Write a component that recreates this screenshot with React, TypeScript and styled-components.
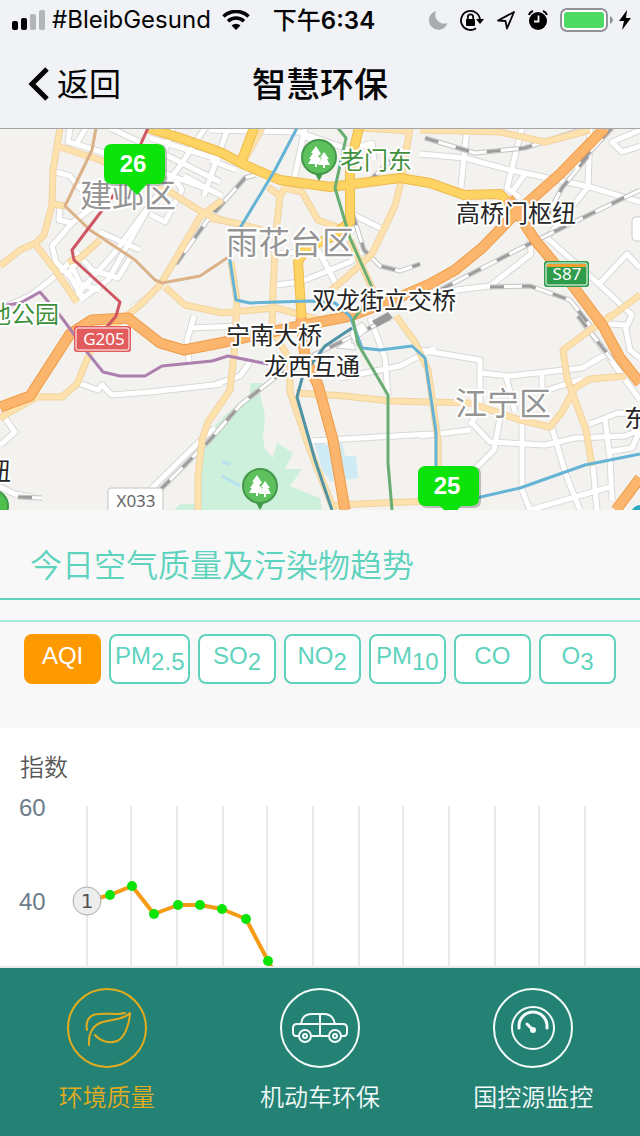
import React, { useState } from 'react';
import styled, { createGlobalStyle } from 'styled-components';

const cjk = '"Noto Sans CJK SC", sans-serif';
const latin = '"Liberation Sans", "Noto Sans CJK SC", sans-serif';

const GlobalStyle = createGlobalStyle`
  *, *::before, *::after { box-sizing: border-box; }
  body { margin: 0; background: #ffffff; font-family: ${latin}; }
  button { font: inherit; cursor: pointer; }
`;

const Screen = styled.div`
  display: flex;
  flex-direction: column;
  height: 100vh;
  overflow: hidden;
`;

const Header = styled.header`
  flex: none;
  background: #f0f2f5;
  color: #050505;
  border-bottom: 1px solid #a3a5a8;
`;

const StatusBar = styled.div`
  display: flex;
  align-items: center;
  justify-content: space-between;
  height: 40px;
  padding: 0 9px 0 12px;
`;

const StatusGroup = styled.div<{ $gap: number }>`
  display: flex;
  align-items: center;
  gap: ${(p) => p.$gap}px;
`;

const Carrier = styled.span`
  font: 400 24px/40px Inter, ${cjk};
  margin: 0 4px 0 0;
`;

const Time = styled.time`
  font: 600 24px/40px Inter, ${cjk};
  margin-left: 16px;
`;

const Cjk = styled.span`
  font-family: ${cjk};
  font-weight: 500;
`;

const NavBar = styled.div`
  display: grid;
  grid-template-columns: 1fr auto 1fr;
  align-items: center;
  height: 88px;
  padding: 0 28px;
`;

const BackButton = styled.button`
  display: flex;
  align-items: center;
  gap: 7px;
  justify-self: start;
  padding: 0;
  border: 0;
  background: none;
  color: inherit;
  font: 400 32px/48px ${cjk};
`;

const BackLabel = styled.span`
  padding-bottom: 4px;
  line-height: 44px;
`;

const PageTitle = styled.h1`
  margin: 0;
  padding-bottom: 2px;
  font: 500 34px/46px ${cjk};
`;

const Content = styled.main`
  flex: 1;
  min-height: 0;
  overflow-y: auto;
  scrollbar-width: none;
  background: #ffffff;
`;

const Drawing = styled.svg`
  display: block;
  width: 100%;
  height: auto;
`;

const TrendPanel = styled.section`
  background: #f8f8f8;
`;

const TrendTitle = styled.h2`
  margin: 0 0 20px;
  padding: 29px 30px 11px;
  border-bottom: 2px solid #5ed2bd;
  color: #5dd3bd;
  font: 350 32px/48px ${cjk};
`;

const PollutantBar = styled.div`
  display: flex;
  gap: 8px;
  padding: 12px 24px 44px;
  border-top: 2px solid #a3e8db;
`;

const Pollutant = styled.button<{ $active: boolean }>`
  flex: 1 1 0;
  height: 50px;
  padding: 0 4px 6px;
  border: 2px solid ${(p) => (p.$active ? '#ff9900' : '#5ed2bd')};
  border-radius: 8px;
  background: ${(p) => (p.$active ? '#ff9900' : '#ffffff')};
  color: ${(p) => (p.$active ? '#ffffff' : '#5dd3bd')};
  font: 400 24px/28px ${latin};
  white-space: nowrap;
`;

const Sub = styled.sub`
  font-size: 24px;
  line-height: 0;
  vertical-align: -6px;
`;

const ChartTitle = styled.h3`
  margin: 0;
  padding: 22px 20px 2px;
  color: #595959;
  font: 350 24px/32px ${cjk};
`;

const TabBar = styled.nav`
  flex: none;
  display: grid;
  grid-template-columns: repeat(3, 1fr);
  border-top: 2px solid #e6ebeb;
  background: #248274;
`;

const Tab = styled.button<{ $active: boolean }>`
  display: flex;
  flex-direction: column;
  align-items: center;
  gap: 10px;
  padding: 20px 0 22px;
  border: 0;
  background: none;
  color: ${(p) => (p.$active ? '#e3ac1e' : '#f4fbfa')};
  font: 350 24px/36px ${cjk};
`;

const Road = styled.g.attrs({ fill: 'none', strokeLinejoin: 'round' })``;

const whiteRoads = [
  'M56 172L70 176L78 186L95 200', 'M70 128L68 142L76 144L86 128', 'M76 144L145 166L215 192', 'M150 138L220 160',
  'M160 152L220 182', 'M173 128L163 156', 'M205 128L180 166L150 205L112 256L72 300', 'M220 150L204 196',
  'M184 176L222 196', 'M176 180L182 190L165 222L150 214', 'M110 128L140 142', 'M60 206L59 220L72 223L128 180',
  'M72 223L52 246L56 262L70 276L84 300', 'M100 232L140 250', 'M150 205L108 280L80 300', 'M76 252L92 270L118 278L130 258',
  'M70 262L80 284L100 290', 'M82 256L66 276', 'M0 309L30 296L58 274L78 254', 'M132 308L145 300',
  'M228 128L210 178', 'M210 130L300 132L325 150', 'M305 128L294 180', 'M302 133L350 150L372 143L374 160',
  'M210 160L236 170', 'M352 214L384 230', 'M276 285L300 282L350 262L362 252', 'M318 250L336 284', 'M275 254L300 252',
  'M420 154L465 158L510 170L590 187L640 202', 'M467 128L461 187', 'M522 128L507 188L520 198', 'M525 174L512 192',
  'M590 128L588 187L545 240', 'M640 130L612 142L622 152L640 146', 'M545 236L600 285L632 315L625 330', 'M600 283L627 254L640 268',
  'M530 240L531 254L490 286L440 292', 'M420 350L480 360L480 410L470 425', 'M480 373L510 376L582 368L610 352',
  'M506 376L515 412', 'M542 372L542 392L560 386L582 379', 'M470 421L490 442L545 445L575 438L625 436L640 430',
  'M500 418L494 450L474 470', 'M522 422L522 490L530 510', 'M552 428L566 475L580 510', 'M605 418L610 460L612 500',
  'M590 424L618 413L640 414', 'M608 452L632 448L640 430', 'M593 466L597 510', 'M530 510L610 487', 'M420 436L470 430',
  'M312 441L360 438L430 434', 'M370 318L385 358L388 395', 'M340 378L400 366L435 348', 'M78 383L98 390L102 385L112 395L150 392L222 384',
  'M150 490L205 436L215 428', 'M0 445L15 432L5 418', 'M0 487L15 494L32 497', 'M190 328L240 326', 'M194 316L187 340L189 362',
  'M210 386L240 376L250 362', 'M594 323L625 325L630 350L640 358', 'M584 323L640 400',
];

const lightRoads = [
  'M60 128L53 170L52 205L44 235L36 243L20 250L0 266', 'M36 245L55 270L77 302', 'M57 146L100 160L170 192L205 214L222 220',
  'M52 204L66 206', 'M100 240L80 258L68 262', 'M222 200L200 217L175 260L160 285L140 305L112 328L95 340L77 384L62 397L37 397L0 418',
  'M165 287L185 305L222 313L276 308L320 320', 'M210 218L240 224L262 230', 'M231 262L237 300L235 344L230 390L208 422L202 440L198 476L198 510',
  'M262 128L240 168', 'M268 187L280 196L276 232L273 290L272 330L290 360L290 392L310 450L334 510', 'M280 196L285 188L302 192L318 220L350 232',
  'M410 128L402 178L395 206L372 254L348 276L322 298', 'M350 240L372 288L385 310',
  'M396 316L415 342L428 370L438 440L438 470', 'M296 393L345 396L390 401L470 403L520 420L550 427L562 412L575 388L590 379L626 376',
  'M612 315L590 330L563 350L567 378L575 400L586 430L592 466', 'M420 130L500 132L545 142L590 130', 'M606 320L640 295', 'M335 505L430 501',
  'M410 131L360 128',
];

const trunkRoads = [
  'M148 128L180 138L220 152L245 165L280 180L330 187L400 178L430 183L464 195L500 194L512 206', 'M254 128L241 162',
  'M359 128L350 165L350 222L330 238L306 248L298 262L302 324',
];

const motorways = [
  'M0 407L30 396L70 334L92 320L128 318L160 343L184 350L220 343L280 330L350 316L400 297L430 284L455 270L482 248L515 214L560 174L605 128',
  'M508 198L535 240L573 286L603 326L620 358L640 383', 'M301 318L305 358L318 385L333 440L345 510', 'M640 478L616 510',
];

const railways = [
  'M215 212L245 178L255 175', 'M176 264L222 200', 'M352 212L364 250L380 266L400 271L420 264', 'M366 184L404 148', 'M425 138L475 153L525 148L586 128',
  'M440 290L525 246L640 190', 'M588 156L562 188L548 214', 'M612 128L575 168', 'M490 287L530 286L570 300L592 328',
  'M160 490L210 440L240 405L290 366L345 340L390 318', 'M18 497L42 498', 'M578 316L612 360',
];

const metroLines: [string, string, number][] = [
  ['M96 128L92 150L65 206L90 230L135 260L155 280L162 283L200 276L230 256', '#dcb187', 3],
  ['M148 128L139 148L113 196L72 250L74 260L120 302L116 316L106 328', '#cf5763', 3],
  ['M0 306L20 303L40 292L62 318L87 352L103 372L120 376L145 376L162 366L212 361L228 356L268 364', '#ad7fae', 3],
  ['M297 128L275 170L240 228L229 254L236 300L250 303L310 301L335 303L350 316L362 348L380 350L412 346L425 358L436 432L436 472', '#65b3d5', 3],
  ['M472 499L520 488L585 465L640 454', '#65b3d5', 3],
  ['M352 328L325 346L303 375L297 397L315 460L332 510', '#4f93a4', 3],
  ['M338 128L346 138L335 188L350 238L374 292L353 320L358 344L388 395L388 463L392 510', '#68ad72', 3],
];

const paths = (list: string[], stroke: string, width: number, dash?: string) => (
  <Road stroke={stroke} strokeWidth={width} strokeDasharray={dash}>
    {list.map((d) => <path key={d} d={d} />)}
  </Road>
);

const MapText = styled.text<{ $size: number; $color: string }>`
  font: 400 ${(p) => p.$size}px ${cjk};
  fill: ${(p) => p.$color};
  stroke: #ffffff;
  stroke-width: 4px;
  stroke-linejoin: round;
  paint-order: stroke;
`;

const ShieldText = styled.text`
  font: 400 17px "Noto Sans", sans-serif;
  text-anchor: middle;
`;

const PinText = styled.text`
  font: 700 24px ${latin};
  fill: #ffffff;
  text-anchor: middle;
`;

const AirPin = ({ x, y, value }: { x: number; y: number; value: number }) => (
  <g transform={`translate(${x} ${y})`}>
    <path d="M9 1H56Q63 1 63 8V35Q63 42 56 42H9Q2 42 2 35V8Q2 1 9 1Z" fill="#555555" opacity="0.35" />
    <path d="M8 0H53Q61 0 61 8V32Q61 40 53 40H43L33 51L22 40H8Q0 40 0 32V8Q0 0 8 0Z" fill="#0be30b" />
    <PinText x={29} y={28}>{value}</PinText>
  </g>
);

const ParkPin = ({ x, y }: { x: number; y: number }) => (
  <g transform={`translate(${x} ${y})`}>
    <path d="M-5 15L0 24L5 15Z" fill="#43984a" />
    <circle r="17" fill="#5dc05c" stroke="#43984a" strokeWidth="2" />
    <path d="M-3 -11L-8 -4H-6L-10 2H-8L-11 7H-4V10H-2V7H0L2 2L-1 -1L2 -3Z" fill="#ffffff" />
    <path d="M5 -5L1 1H3L-1 8H4V11H6V8H11L8 2H10Z" fill="#ffffff" />
  </g>
);

const CityMap = () => (
  <Drawing viewBox="0 129 640 381" role="img" aria-label="地图">
    <rect y="128" width="640" height="382" fill="#f3f2ef" />
    <path d="M250 383L263 383L260 394L265 416L263 439L265 449L273 458L277 443L293 453L285 469L302 469L290 486L309 494L320 498L322 510H174L180 504L198 504L205 436L225 415L250 395Z" fill="#cdf0dc" />
    <path d="M222 462L230 464M222 476L240 486" stroke="#b5e0ee" strokeWidth="3" />
    <path d="M314 441L326 445L342 442L345 456L356 456L358 478L331 482L322 470Z" fill="#cfebf5" />
    {paths(whiteRoads, '#d9d8d9', 7)}
    {paths(whiteRoads, '#ffffff', 5)}
    {paths(railways, '#c4c4c4', 5)}
    {paths(railways, '#ffffff', 3)}
    {paths(railways, '#9c9c9c', 3, '14 18')}
    {paths(lightRoads, '#f2d3a2', 7)}
    {paths(lightRoads, '#fde2ad', 5)}
    {paths(trunkRoads, '#efba4c', 10)}
    {paths(trunkRoads, '#fdd363', 8)}
    {paths(motorways, '#ee9c46', 11)}
    {paths(motorways, '#fcb56d', 9)}
    <path d="M350 332L362 322L368 330L352 344Z M336 348L352 338L356 350Z" fill="#ffffff" stroke="#cfcfcf" />
    <path d="M372 321L388 312L393 318L377 327Z" fill="#989898" />
    {metroLines.map(([d, color, width]) => (
      <Road key={d} stroke={color} strokeWidth={width}><path d={d} /></Road>
    ))}
    <rect x="632" y="217" width="16" height="24" rx="4" fill="#ffffff" stroke="#cccccc" />
    <circle cx="640" cy="514" r="9" fill="#2aa8be" />
    <circle cx="-8" cy="506" r="16" fill="#4fc04e" stroke="#43984a" strokeWidth="2" />

    <MapText x={80} y={207} $size={32} $color="#959595">建邺区</MapText>
    <MapText x={226} y={254} $size={32} $color="#959595">雨花台区</MapText>
    <MapText x={455} y={415} $size={32} $color="#959595">江宁区</MapText>
    <MapText x={340} y={169} $size={24} $color="#3f8f3d">老门东</MapText>
    <MapText x={-13} y={323} $size={24} $color="#3f8f3d">地公园</MapText>
    <MapText x={456} y={222} $size={24} $color="#262626">高桥门枢纽</MapText>
    <MapText x={312} y={309} $size={24} $color="#262626">双龙街立交桥</MapText>
    <MapText x={226} y={344} $size={24} $color="#262626">宁南大桥</MapText>
    <MapText x={264} y={375} $size={24} $color="#262626">龙西互通</MapText>
    <MapText x={624} y={427} $size={24} $color="#262626">东</MapText>
    <MapText x={-13} y={480} $size={24} $color="#262626">纽</MapText>

    <rect x="74" y="326" width="57" height="26" rx="3" fill="#e25c5e" />
    <rect x="76" y="328" width="53" height="22" rx="2" fill="none" stroke="#ffffff" />
    <ShieldText x={104} y={345} fill="#ffffff">G205</ShieldText>
    <rect x="544" y="261" width="45" height="26" rx="3" fill="#2f9c4c" />
    <rect x="546" y="263" width="41" height="22" rx="2" fill="none" stroke="#ffffff" />
    <rect x="547" y="264" width="39" height="3" fill="#f0a030" />
    <ShieldText x={567} y={280} fill="#ffffff">S87</ShieldText>
    <rect x="108" y="488" width="55" height="28" rx="3" fill="#ffffff" stroke="#c3c3c3" />
    <ShieldText x={136} y={507} fill="#666666">X033</ShieldText>

    <ParkPin x={319} y={157} />
    <ParkPin x={260} y={486} />
    <AirPin x={104} y={144} value={26} />
    <AirPin x={418} y={466} value={25} />
  </Drawing>
);

const gridLines = [87, 131, 177, 223, 267, 313, 359, 403, 449, 495, 539, 585];
const readings: [number, number][] = [
  [110, 111], [132, 102], [154, 130], [178, 121], [200, 121], [222, 125], [246, 135], [268, 177],
];

const AxisText = styled.text`
  font: 400 24px ${latin};
  fill: #6d7c8b;
`;

const MarkerText = styled.text`
  font: 400 20px "DejaVu Sans", sans-serif;
  fill: #555555;
  text-anchor: middle;
`;

const TrendChart = () => (
  <Drawing viewBox="0 0 640 230" role="img" aria-label="AQI">
    {gridLines.map((x) => <path key={x} d={`M${x} 22V230`} stroke="#e9e9e9" strokeWidth="2" />)}
    <AxisText x={19} y={32}>60</AxisText>
    <AxisText x={19} y={126}>40</AxisText>
    <polyline
      points={`87,117 ${readings.map((p) => p.join(',')).join(' ')} 290,215`}
      fill="none" stroke="#f59b14" strokeWidth="4" strokeLinejoin="round"
    />
    {readings.map(([x, y]) => <circle key={x} cx={x} cy={y} r="5" fill="#0be30b" />)}
    <circle cx="87" cy="117" r="14" fill="#eeeeee" stroke="#aaaaaa" />
    <MarkerText x={87} y={124}>1</MarkerText>
  </Drawing>
);

const SignalIcon = () => (
  <svg width="33" height="20" viewBox="0 0 33 20" aria-hidden="true">
    <rect y="11" width="6" height="9" rx="2" />
    <rect x="9" y="8" width="6" height="12" rx="2" />
    <rect x="18" y="4" width="6" height="16" rx="2" fill="#b4b5b7" />
    <rect x="27" width="6" height="20" rx="2" fill="#b4b5b7" />
  </svg>
);

const WifiIcon = () => (
  <svg width="28" height="20" viewBox="0 0 28 20" aria-hidden="true">
    <path d="M1.500 6.500A18 18 0 0 1 26.500 6.500M6 11.300A11.500 11.500 0 0 1 22 11.300" fill="none" stroke="#050505" strokeWidth="3.600" />
    <path d="M14 20L9.500 15.500A6.500 6.500 0 0 1 18.500 15.500Z" />
  </svg>
);

const MoonIcon = () => (
  <svg width="19" height="20" viewBox="0 0 19 20" aria-hidden="true">
    <path d="M7 1A9.500 9.500 0 1 0 18.500 13A9 9 0 0 1 7 1Z" fill="#a9abad" />
  </svg>
);

const LockIcon = () => (
  <svg width="24" height="22" viewBox="0 0 24 22" aria-hidden="true">
    <path d="M16 19.200A9.500 9.500 0 1 1 20 11" fill="none" stroke="#050505" strokeWidth="1.800" />
    <path d="M16 10H24L20 15Z" />
    <rect x="6" y="10" width="9" height="7" rx="1" />
    <path d="M7.800 10V8A2.700 2.700 0 0 1 13.200 8V10" fill="none" stroke="#050505" strokeWidth="1.800" />
  </svg>
);

const LocationIcon = () => (
  <svg width="20" height="20" viewBox="0 0 20 20" aria-hidden="true">
    <path d="M18 2L2 10.500L9.500 11L11 18.500Z" fill="none" stroke="#050505" strokeWidth="1.800" strokeLinejoin="round" />
  </svg>
);

const AlarmIcon = () => (
  <svg width="20" height="20" viewBox="0 0 20 20" aria-hidden="true">
    <circle cx="10" cy="11" r="9" />
    <path d="M1 5A6 6 0 0 1 5 1M19 5A6 6 0 0 0 15 1" fill="none" stroke="#050505" strokeWidth="2" />
    <path d="M10.500 5.500V11.500H6" fill="none" stroke="#f0f2f5" strokeWidth="1.800" />
  </svg>
);

const BatteryIcon = () => (
  <svg width="54" height="24" viewBox="0 0 54 24" aria-hidden="true">
    <rect x="1" y="1" width="46" height="22" rx="6" fill="#ffffff" stroke="#919396" strokeWidth="2" />
    <rect x="4" y="4" width="40" height="16" rx="3" fill="#4cd964" />
    <path d="M50 8Q53 10 53 12Q53 14 50 16Z" fill="#8d8f92" />
  </svg>
);

const BoltIcon = () => (
  <svg width="12" height="20" viewBox="0 0 12 20" aria-hidden="true">
    <path d="M8 0L0 11H5L3 20L12 8H7Z" />
  </svg>
);

const TabIcon = ({ children }: { children: React.ReactNode }) => (
  <svg width="80" height="80" viewBox="0 0 80 80" fill="none" stroke="currentColor" strokeWidth="2" strokeLinecap="round" strokeLinejoin="round" aria-hidden="true">
    <circle cx="40" cy="40" r="39" />
    {children}
  </svg>
);

const tabs = [
  {
    label: '环境质量',
    icon: <path d="M20 42C18 31 24 26 32 26C42 25 50 27 58 25M22 57C21 43 28 36 36 34C46 31 56 32 63 25C62 39 57 50 50 53C42 56 33 53 28 47" />,
  },
  {
    label: '机动车环保',
    icon: (
      <>
        <path d="M18 48H16Q13 48 13 44V40Q13 36 17 36H63Q67 36 67 40V44Q67 48 64 48H62M32 48H48M21 36Q22 26 32 26H44Q53 26 55 36M40 26V48" />
        <circle cx="25" cy="48" r="6" /><circle cx="25" cy="48" r="2" />
        <circle cx="55" cy="48" r="6" /><circle cx="55" cy="48" r="2" />
      </>
    ),
  },
  {
    label: '国控源监控',
    icon: (
      <>
        <circle cx="40" cy="40" r="21" />
        <path d="M26 40V38A14 14 0 0 1 54 38V40" strokeWidth="3" />
        <path d="M34 36L39 41" strokeWidth="3" />
        <circle cx="40" cy="42" r="2" fill="currentColor" />
      </>
    ),
  },
];

const pollutants: [string, string][] = [
  ['AQI', ''], ['PM', '2.5'], ['SO', '2'], ['NO', '2'], ['PM', '10'], ['CO', ''], ['O', '3'],
];

export default function App() {
  const [pollutant, setPollutant] = useState(0);
  const [tab, setTab] = useState(0);

  return (
    <Screen>
      <GlobalStyle />
      <Header>
        <StatusBar>
          <StatusGroup $gap={7}>
            <SignalIcon />
            <Carrier>#BleibGesund</Carrier>
            <WifiIcon />
            <Time><Cjk>下午</Cjk>6:34</Time>
          </StatusGroup>
          <StatusGroup $gap={12}>
            <MoonIcon />
            <LockIcon />
            <LocationIcon />
            <AlarmIcon />
            <StatusGroup $gap={5}>
              <BatteryIcon />
              <BoltIcon />
            </StatusGroup>
          </StatusGroup>
        </StatusBar>
        <NavBar>
          <BackButton type="button">
            <svg width="22" height="36" viewBox="0 0 22 36" aria-hidden="true">
              <path d="M19 3L4 18L19 33" fill="none" stroke="#050505" strokeWidth="5" />
            </svg>
            <BackLabel>返回</BackLabel>
          </BackButton>
          <PageTitle>智慧环保</PageTitle>
        </NavBar>
      </Header>

      <Content>
        <CityMap />
        <TrendPanel>
          <TrendTitle>今日空气质量及污染物趋势</TrendTitle>
          <PollutantBar>
            {pollutants.map(([name, sub], i) => (
              <Pollutant key={name + sub} type="button" $active={i === pollutant} onClick={() => setPollutant(i)}>
                {name}{sub && <Sub>{sub}</Sub>}
              </Pollutant>
            ))}
          </PollutantBar>
        </TrendPanel>
        <section>
          <ChartTitle>指数</ChartTitle>
          <TrendChart />
        </section>
      </Content>

      <TabBar>
        {tabs.map((t, i) => (
          <Tab key={t.label} type="button" $active={i === tab} onClick={() => setTab(i)}>
            <TabIcon>{t.icon}</TabIcon>
            {t.label}
          </Tab>
        ))}
      </TabBar>
    </Screen>
  );
}
